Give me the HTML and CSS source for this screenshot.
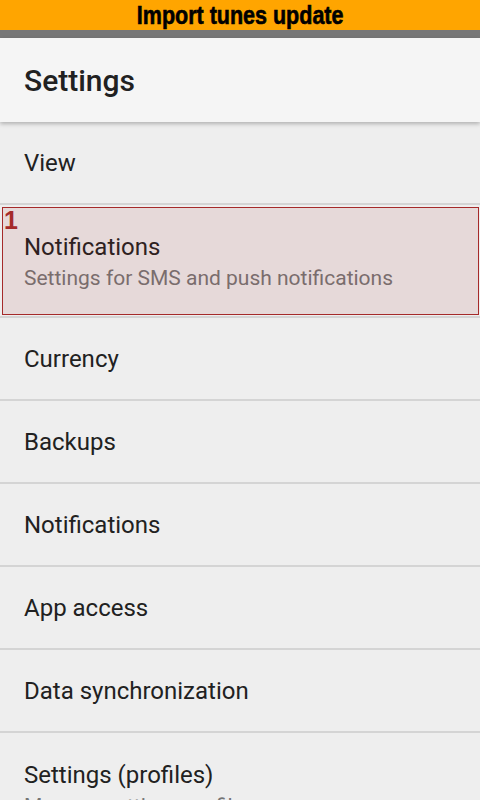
FILE: index.html
```html
<!DOCTYPE html>
<html>
<head>
<meta charset="utf-8">
<link rel="stylesheet" href="styles.css">
</head>
<body>
<div class="banner"><span class="banner-text">Import tunes update</span></div>
<div class="statusbar"></div>
<header class="appbar"><h1 class="title">Settings</h1></header>
<ul class="list">
  <li class="item"><span class="item-title">View</span></li>
  <li class="item item-two">
    <span class="item-title">Notifications</span>
    <span class="item-sub">Settings for SMS and push notifications</span>
    <div class="mark"><span class="mark-num">1</span></div>
  </li>
  <li class="item"><span class="item-title">Currency</span></li>
  <li class="item"><span class="item-title">Backups</span></li>
  <li class="item"><span class="item-title">Notifications</span></li>
  <li class="item"><span class="item-title">App access</span></li>
  <li class="item"><span class="item-title">Data synchronization</span></li>
  <li class="item item-two">
    <span class="item-title">Settings (profiles)</span>
    <span class="item-sub">Manage settings profiles</span>
  </li>
</ul>
</body>
</html>
```
FILE: styles.css
```css
html, body {
  margin: 0;
  padding: 0;
  background: #eeeeee;
  height: 800px;
  overflow: hidden;
}
body {
  font-family: Roboto, "Noto Sans", sans-serif;
}
.banner {
  height: 30px;
  background: #ffa500;
  text-align: center;
  overflow: hidden;
}
.banner-text {
  display: inline-block;
  color: #000;
  font-family: "Liberation Sans", Arial, sans-serif;
  font-weight: bold;
  font-size: 25px;
  line-height: 30px;
  -webkit-text-stroke: 0.6px #000;
  transform: scaleX(0.86);
}
.statusbar {
  height: 8px;
  background: #777777;
}
.appbar {
  height: 84px;
  background: #f5f5f5;
  display: flex;
  align-items: center;
  padding: 0 24px;
  box-shadow: 0 2px 4px rgba(0,0,0,0.25);
  position: relative;
  z-index: 1;
}
.title {
  margin: 0;
  font-size: 30px;
  font-weight: 500;
  color: #212121;
}
.list {
  list-style: none;
  margin: 0;
  padding: 0;
}
.item {
  position: relative;
  height: 81px;
  border-bottom: 2px solid #d4d4d4;
  display: flex;
  flex-direction: column;
  justify-content: center;
  padding: 0 24px;
}
.item-two {
  box-sizing: border-box;
  height: 113px;
  justify-content: flex-start;
  padding-top: 28px;
  gap: 4px;
}
.item-title {
  font-size: 24px;
  line-height: 28px;
  color: #212121;
}
.item-sub {
  font-size: 21px;
  line-height: 26px;
  color: #757575;
}
.mark {
  position: absolute;
  top: 2px;
  bottom: 1px;
  left: 2px;
  right: 1px;
  border: 1px solid #a52a2a;
  background: rgba(165, 42, 42, 0.1);
}
.mark-num {
  position: absolute;
  top: 0;
  left: 1px;
  font-family: "Liberation Sans", Arial, sans-serif;
  font-weight: bold;
  font-size: 25px;
  line-height: 24px;
  color: #a52a2a;
}
```
